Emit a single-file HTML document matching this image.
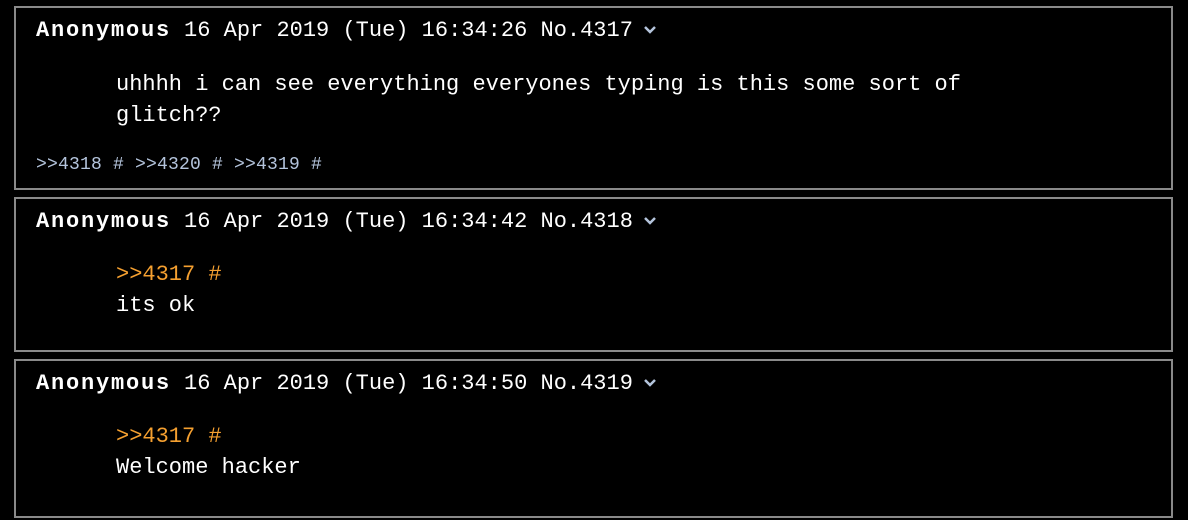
<!DOCTYPE html>
<html><head><style>
body{margin:0;background:#000;width:1188px;height:520px;overflow:hidden;font-family:"Liberation Mono",monospace;color:#fff}
.p{position:absolute;left:14px;width:1159px;border:2px solid #8a8a8a;box-sizing:border-box}
.h{position:absolute;left:20px;top:8px;font-size:22px;white-space:pre;line-height:30px}
.h b{font-weight:bold;letter-spacing:1.8px;margin-right:13px}
.chev{display:inline-block;margin-left:10px;vertical-align:middle}
.t{position:absolute;left:100px;font-size:22px;line-height:31px;white-space:pre}
.q{color:#f5a030}
.r{position:absolute;left:20px;font-size:18px;letter-spacing:0.2px;color:#b4c4dc;white-space:pre}
</style></head><body>
<div class="p" style="top:6px;height:184px">
<div class="h"><b>Anonymous</b>16 Apr 2019 (Tue) 16:34:26 No.4317<svg class="chev" width="14" height="10" viewBox="0 0 14 10"><path d="M2 2l5 5 5-5" stroke="#b4c4dc" stroke-width="2.5" fill="none"/></svg></div>
<div class="t" style="top:61px">uhhhh i can see everything everyones typing is this some sort of
glitch??</div>
<div class="r" style="top:147px">&gt;&gt;4318 # &gt;&gt;4320 # &gt;&gt;4319 #</div>
</div>
<div class="p" style="top:197px;height:155px">
<div class="h"><b>Anonymous</b>16 Apr 2019 (Tue) 16:34:42 No.4318<svg class="chev" width="14" height="10" viewBox="0 0 14 10"><path d="M2 2l5 5 5-5" stroke="#b4c4dc" stroke-width="2.5" fill="none"/></svg></div>
<div class="t" style="top:60px"><span class="q">&gt;&gt;4317 #</span>
its ok</div>
</div>
<div class="p" style="top:359px;height:159px">
<div class="h"><b>Anonymous</b>16 Apr 2019 (Tue) 16:34:50 No.4319<svg class="chev" width="14" height="10" viewBox="0 0 14 10"><path d="M2 2l5 5 5-5" stroke="#b4c4dc" stroke-width="2.5" fill="none"/></svg></div>
<div class="t" style="top:60px"><span class="q">&gt;&gt;4317 #</span>
Welcome hacker</div>
</div>
</body></html>
